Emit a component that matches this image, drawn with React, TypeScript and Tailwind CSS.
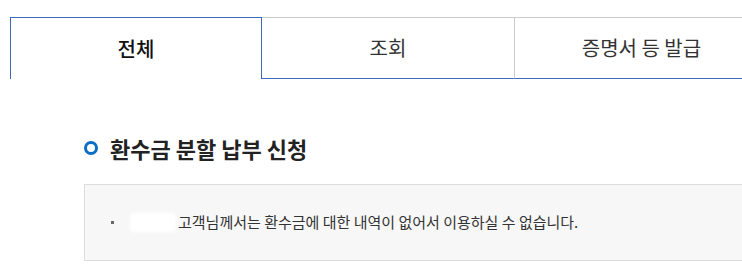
import React from "react";

const FONT = {
  fontFamily: '"Noto Sans CJK KR", "Noto Sans", sans-serif',
};

const tabs = ["전체", "조회", "증명서 등 발급"];

export default function App() {
  return (
    <div
      className="w-[742px] h-[276px] overflow-hidden bg-white text-[#222]"
      style={FONT}
    >
      {/* tabs */}
      <div className="flex pt-[17px] pl-[10px] w-[1000px]">
        {tabs.map((t, i) => {
          const active = i === 0;
          return (
            <div
              key={t}
              className={
                active
                  ? "w-[252px] h-[62px] flex items-center justify-center border-t border-l border-r border-[#3b69bf] text-[20px] font-medium text-[#111]"
                  : i === 1
                  ? "w-[253px] h-[62px] flex items-center justify-center border-t border-t-[#cccccc] border-b border-b-[#3b69bf] border-r border-r-[#cccccc] text-[20px] text-[#333]"
                  : "w-[253px] h-[62px] flex items-center justify-center border-t border-t-[#cccccc] border-b border-b-[#3b69bf] text-[20px] text-[#333]"
              }
            >
              {t}
            </div>
          );
        })}
      </div>

      {/* section title */}
      <div className="flex items-center gap-[12px] pl-[84px] mt-[58px] h-[22px]">
        <span className="w-[14px] h-[14px] rounded-full border-[3.5px] border-[#0b6dc3]" />
        <h2 className="text-[22px] font-bold text-[#222] leading-none">
          환수금 분할 납부 신청
        </h2>
      </div>

      {/* notice box */}
      <div className="ml-[84px] mt-[25px] w-[700px] h-[77px] border border-[#dddddd] bg-[#f7f7f7] flex items-center pl-[26px]">
        <span className="w-[3px] h-[3px] bg-[#666] mr-[16px]" />
        <span className="inline-block w-[46px] h-[19px] bg-white rounded-[4px] blur-[1.5px] mr-[2px]" />
        <span className="text-[15px] text-[#333]">
          고객님께서는 환수금에 대한 내역이 없어서 이용하실 수 없습니다.
        </span>
      </div>
    </div>
  );
}
